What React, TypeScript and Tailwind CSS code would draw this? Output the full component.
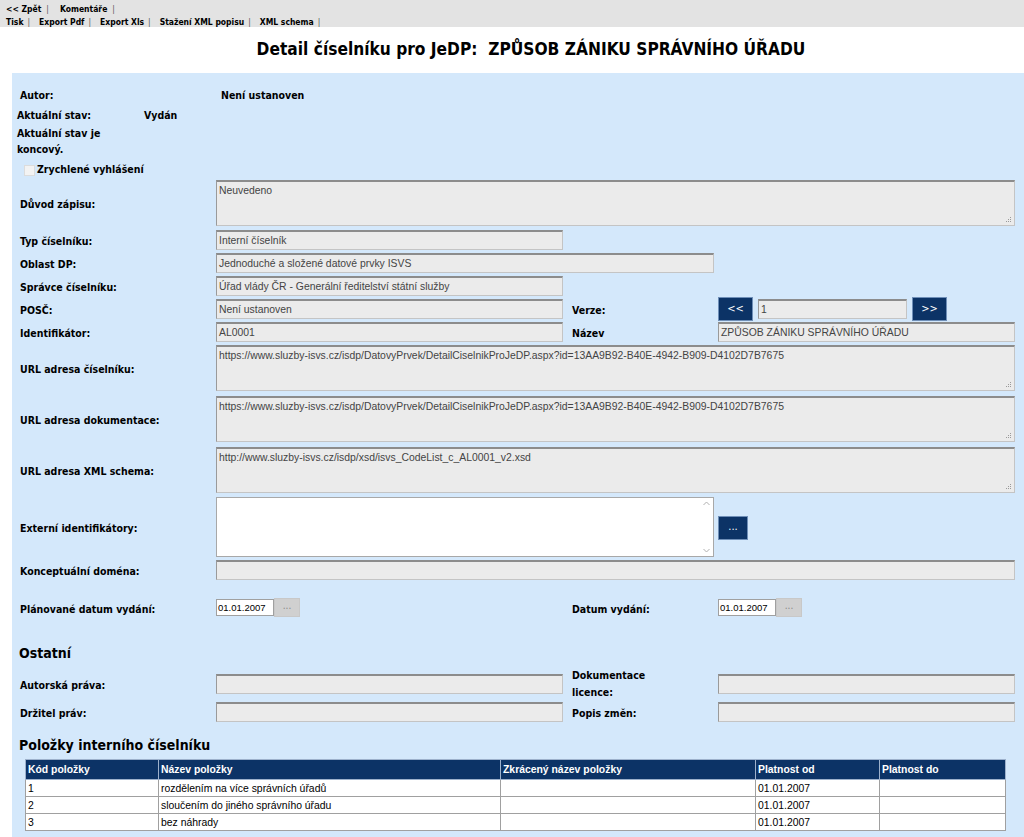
import React from "react";

const FONT = { fontFamily: '"DejaVu Sans Condensed", "DejaVu Sans", "Liberation Sans", sans-serif' };
const INPUT_FONT = { fontFamily: '"Liberation Sans", Arial, sans-serif' };

function Field({ value = "", className = "" }: { value?: string; className?: string }) {
  return (
    <div
      style={INPUT_FONT}
      className={`h-[20px] bg-[#ebebeb] border border-[#c4c4c4] border-t-2 border-t-[#8c8c8c] border-l-[#9a9a9a] px-[2px] text-[10.4px] leading-[17px] text-[#444] whitespace-nowrap overflow-hidden ${className}`}
    >
      {value}
    </div>
  );
}

function Grip() {
  return (
    <svg className="absolute right-[2px] bottom-[2px]" width="7" height="7" viewBox="0 0 7 7">
      <rect x="5" y="1" width="1" height="1" fill="#9a9a9a" />
      <rect x="3" y="3" width="1" height="1" fill="#9a9a9a" />
      <rect x="5" y="3" width="1" height="1" fill="#9a9a9a" />
      <rect x="1" y="5" width="1" height="1" fill="#9a9a9a" />
      <rect x="3" y="5" width="1" height="1" fill="#9a9a9a" />
      <rect x="5" y="5" width="1" height="1" fill="#9a9a9a" />
    </svg>
  );
}

function Area({ value = "" }: { value?: string }) {
  return (
    <div
      style={INPUT_FONT}
      className="relative flex-1 h-[46px] bg-[#ebebeb] border border-[#c4c4c4] border-t-2 border-t-[#8c8c8c] border-l-[#9a9a9a] px-[2px] pt-[1px] text-[10.4px] leading-[15px] text-[#444]"
    >
      {value}
      <Grip />
    </div>
  );
}

function Label({ children, className = "" }: { children: React.ReactNode; className?: string }) {
  return (
    <div className={`w-[196px] shrink-0 pt-[4px] text-[10.5px] font-bold text-black ${className}`}>{children}</div>
  );
}

function RightLabel({ children }: { children: React.ReactNode }) {
  return <div className="w-[155px] shrink-0 pl-[9px] pt-[4px] text-[10.5px] font-bold text-black">{children}</div>;
}

function NavyBtn({ children, className = "" }: { children: React.ReactNode; className?: string }) {
  return (
    <div
      className={`flex items-center justify-center bg-[#0c3366] border border-[#6f8fb8] text-white text-[11px] ${className}`}
    >
      {children}
    </div>
  );
}

function DateField({ value }: { value: string }) {
  return (
    <div className="flex items-center">
      <div
        style={INPUT_FONT}
        className="w-[58px] h-[17px] bg-white border border-[#a0a0a0] text-[9.5px] leading-[15px] px-[1px] text-black"
      >
        {value}
      </div>
      <div className="w-[26px] h-[19px] bg-[#d0d0d0] border border-[#c8c8c8] text-[#888] text-[10px] leading-[14px] text-center">
        ...
      </div>
    </div>
  );
}

function Sep({ first = false }: { first?: boolean }) {
  return (
    <span className={`font-normal text-[#555] ${first ? "ml-[5px] mr-[11px]" : "ml-[4px] mr-[9px]"}`}>|</span>
  );
}

export default function App() {
  const rows = [
    ["1", "rozdělením na více správních úřadů", "", "01.01.2007", ""],
    ["2", "sloučením do jiného správního úřadu", "", "01.01.2007", ""],
    ["3", "bez náhrady", "", "01.01.2007", ""],
  ];
  const headers = ["Kód položky", "Název položky", "Zkrácený název položky", "Platnost od", "Platnost do"];
  const widths = ["w-[133px]", "w-[342px]", "w-[255px]", "w-[124px]", "w-[126px]"];

  return (
    <div style={FONT} className="w-[1024px] h-[837px] overflow-hidden bg-white">
      {/* Top menu */}
      <div className="h-[27px] bg-[#e3e3e3] text-[8.5px] font-bold text-black">
        <div className="flex items-center h-[15px] pl-[6px] pt-[3px]">
          <span>&lt;&lt; Zpět</span>
          <Sep first />
          <span>Komentáře</span>
          <Sep first />
        </div>
        <div className="flex items-center h-[12px] pl-[6px] pt-[2px]">
          <span>Tisk</span>
          <Sep />
          <span>Export Pdf</span>
          <Sep />
          <span>Export Xls</span>
          <Sep />
          <span>Stažení XML popisu</span>
          <Sep />
          <span>XML schema</span>
          <Sep />
        </div>
      </div>

      {/* Title */}
      <div className="h-[46px] flex items-center justify-center pl-[38px]">
        <h1 className="text-[17.2px] font-bold text-black">Detail číselníku pro JeDP:&nbsp; ZPŮSOB ZÁNIKU SPRÁVNÍHO ÚŘADU</h1>
      </div>

      {/* Panel */}
      <div className="ml-[12px] bg-[#d4e8fb] pl-[8px] pr-[9px] pt-[15px] pb-[20px]">
        <div className="flex h-[16px] items-center text-[10.5px] font-bold">
          <div className="w-[201px]">Autor:</div>
          <div>Není ustanoven</div>
        </div>
        <div className="flex h-[16px] items-center text-[10.5px] font-bold mt-[4px] -ml-[3px]">
          <div className="w-[127px]">Aktuální stav:</div>
          <div>Vydán</div>
        </div>
        <div className="w-[100px] text-[10.5px] font-bold leading-[16px] mt-[1px] -ml-[3px]">Aktuální stav je koncový.</div>
        <div className="flex items-center h-[16px] mt-[5px] ml-[4px] text-[10.5px] font-bold">
          <div className="w-[11px] h-[11px] bg-[#f3f3f3] border border-[#dcdcdc] mr-[2px]" />
          <span>Zrychlené vyhlášení</span>
        </div>

        <div className="flex items-center mt-[2px]">
          <Label>Důvod zápisu:</Label>
          <Area value="Neuvedeno" />
        </div>

        <div className="flex items-center mt-[4px]">
          <Label>Typ číselníku:</Label>
          <Field value="Interní číselník" className="w-[347px]" />
        </div>
        <div className="flex items-center mt-[3px]">
          <Label>Oblast DP:</Label>
          <Field value="Jednoduché a složené datové prvky ISVS" className="w-[498px]" />
        </div>
        <div className="flex items-center mt-[3px]">
          <Label>Správce číselníku:</Label>
          <Field value="Úřad vlády ČR - Generální ředitelství státní služby" className="w-[347px]" />
        </div>
        <div className="flex items-center h-[20px] mt-[3px]">
          <Label>POSČ:</Label>
          <Field value="Není ustanoven" className="w-[347px]" />
          <RightLabel>Verze:</RightLabel>
          <NavyBtn className="w-[35px] h-[24px]">&lt;&lt;</NavyBtn>
          <Field value="1" className="w-[149px] ml-[5px]" />
          <NavyBtn className="w-[35px] h-[24px] ml-[5px]">&gt;&gt;</NavyBtn>
        </div>
        <div className="flex items-center mt-[3px]">
          <Label>Identifikátor:</Label>
          <Field value="AL0001" className="w-[347px]" />
          <RightLabel>Název</RightLabel>
          <Field value="ZPŮSOB ZÁNIKU SPRÁVNÍHO ÚŘADU" className="flex-1" />
        </div>

        <div className="flex items-center mt-[3px]">
          <Label>URL adresa číselníku:</Label>
          <Area value="https://www.sluzby-isvs.cz/isdp/DatovyPrvek/DetailCiselnikProJeDP.aspx?id=13AA9B92-B40E-4942-B909-D4102D7B7675" />
        </div>
        <div className="flex items-center mt-[5px]">
          <Label>URL adresa dokumentace:</Label>
          <Area value="https://www.sluzby-isvs.cz/isdp/DatovyPrvek/DetailCiselnikProJeDP.aspx?id=13AA9B92-B40E-4942-B909-D4102D7B7675" />
        </div>
        <div className="flex items-center mt-[5px]">
          <Label>URL adresa XML schema:</Label>
          <Area value="http://www.sluzby-isvs.cz/isdp/xsd/isvs_CodeList_c_AL0001_v2.xsd" />
        </div>

        <div className="flex items-center mt-[4px]">
          <Label>Externí identifikátory:</Label>
          <div className="relative w-[498px] h-[60px] bg-white border border-[#a8a8a8]">
            <svg className="absolute right-[3px] top-[3px]" width="7" height="5" viewBox="0 0 7 5">
              <path d="M0.5 4 L3.5 1 L6.5 4" fill="none" stroke="#b0b0b0" strokeWidth="1" />
            </svg>
            <svg className="absolute right-[3px] bottom-[3px]" width="7" height="5" viewBox="0 0 7 5">
              <path d="M0.5 1 L3.5 4 L6.5 1" fill="none" stroke="#b0b0b0" strokeWidth="1" />
            </svg>
          </div>
          <NavyBtn className="w-[30px] h-[24px] ml-[4px] mt-[1px]">...</NavyBtn>
        </div>

        <div className="flex items-center mt-[3px]">
          <Label>Konceptuální doména:</Label>
          <Field className="flex-1 h-[19px]" />
        </div>

        <div className="flex items-center mt-[18px] h-[19px]">
          <Label>Plánované datum vydání:</Label>
          <div className="w-[356px]">
            <DateField value="01.01.2007" />
          </div>
          <div className="w-[146px] pt-[4px] text-[10.5px] font-bold">Datum vydání:</div>
          <DateField value="01.01.2007" />
        </div>

        <div className="mt-[27px] text-[14px] font-bold h-[18px] leading-[18px] -ml-[1px]">Ostatní</div>

        <div className="flex items-center h-[19px] mt-[12px]">
          <Label>Autorská práva:</Label>
          <Field className="w-[347px] h-[19px]" />
          <div className="w-[155px] shrink-0 pl-[9px] pt-[1px] text-[10.5px] font-bold leading-[17px]">
            Dokumentace
            <br />
            licence:
          </div>
          <Field className="flex-1 h-[19px]" />
        </div>
        <div className="flex items-center mt-[9px]">
          <Label>Držitel práv:</Label>
          <Field className="w-[347px] h-[19px]" />
          <RightLabel>Popis změn:</RightLabel>
          <Field className="flex-1 h-[19px]" />
        </div>

        <div className="mt-[14px] text-[14px] font-bold h-[18px] leading-[18px] -ml-[1px]">Položky interního číselníku</div>

        <table style={INPUT_FONT} className="mt-[5px] ml-[5px] border-collapse text-[10.4px]">
          <thead>
            <tr className="h-[20px] bg-[#0c3366] text-white">
              {headers.map((h, i) => (
                <th key={h} className={`${widths[i]} text-left font-bold px-[2px] border border-[#9db1cc]`}>
                  {h}
                </th>
              ))}
            </tr>
          </thead>
          <tbody>
            {rows.map((r) => (
              <tr key={r[0]} className="h-[17px] bg-white text-black">
                {r.map((c, i) => (
                  <td key={i} className="px-[2px] border border-[#a0a0a0] leading-[15px]">
                    {c}
                  </td>
                ))}
              </tr>
            ))}
          </tbody>
        </table>
      </div>
    </div>
  );
}
